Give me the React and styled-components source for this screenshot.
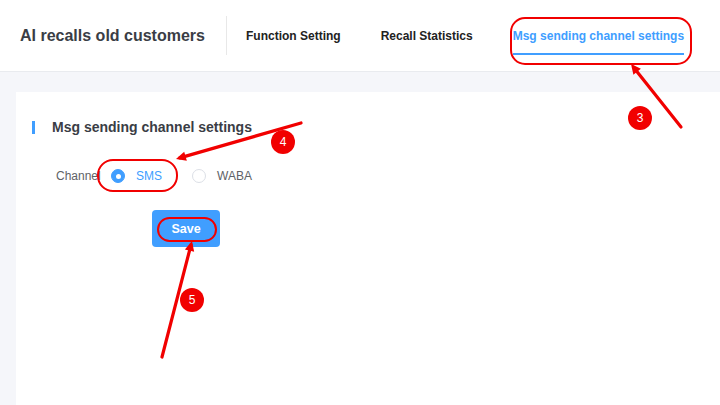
import React from "react";
import styled, { createGlobalStyle } from "styled-components";

const Global = createGlobalStyle`
  html, body { margin: 0; padding: 0; }
  body { font-family: "Liberation Sans", Arial, sans-serif; background: #f5f6fa; }
  #root { width: 720px; height: 405px; overflow: hidden; }
`;

const Page = styled.div`
  position: relative;
  width: 720px;
  height: 405px;
  overflow: hidden;
  background: #f5f6fa;
  display: flex;
  flex-direction: column;
`;

const Header = styled.header`
  height: 71px;
  background: #fff;
  border-bottom: 1px solid #e9ebef;
  display: flex;
  align-items: center;
  padding-left: 20px;
  flex-shrink: 0;
  white-space: nowrap;
`;

const Title = styled.h1`
  margin: 0;
  font-size: 16px;
  font-weight: bold;
  color: #3a3d45;
  width: 206px;
  flex-shrink: 0;
`;

const Divider = styled.div`
  width: 1px;
  height: 39px;
  background: #e8e8e8;
  margin-right: 19px;
  flex-shrink: 0;
`;

const Tabs = styled.nav`
  display: flex;
  height: 100%;
  gap: 40px;
  flex-shrink: 0;
`;

const Tab = styled.div`
  position: relative;
  display: flex;
  align-items: center;
  font-size: 12px;
  font-weight: bold;
  white-space: nowrap;
  color: ${(p) => (p.$active ? "#409eff" : "#222")};
  &::after {
    content: "";
    display: ${(p) => (p.$active ? "block" : "none")};
    position: absolute;
    left: 0;
    right: 0;
    bottom: 16px;
    height: 2px;
    background: #409eff;
  }
`;

const Body = styled.main`
  flex: 1;
  padding: 20px 0 0 16px;
  display: flex;
`;

const Card = styled.section`
  flex: 1;
  background: #fff;
  padding: 28px 0 0 16px;
`;

const SectionTitle = styled.h2`
  margin: 0;
  display: flex;
  align-items: center;
  gap: 17px;
  font-size: 14px;
  font-weight: bold;
  color: #3a3d45;
  height: 14px;
  &::before {
    content: "";
    width: 3px;
    height: 13px;
    background: #409eff;
  }
`;

const FormRow = styled.div`
  display: flex;
  align-items: center;
  margin-top: 32px;
  padding-left: 24px;
  height: 20px;
`;

const Label = styled.span`
  font-size: 12px;
  color: #606266;
  width: 55px;
  white-space: nowrap;
`;

const RadioGroup = styled.div`
  display: flex;
  align-items: center;
  gap: 30px;
`;

const Radio = styled.label`
  display: flex;
  align-items: center;
  gap: 11px;
  font-size: 12px;
  color: ${(p) => (p.$checked ? "#409eff" : "#606266")};
`;

const Dot = styled.span`
  width: 14px;
  height: 14px;
  border-radius: 50%;
  box-sizing: border-box;
  border: 1px solid ${(p) => (p.$checked ? "#409eff" : "#dcdfe6")};
  background: ${(p) => (p.$checked ? "#409eff" : "#fff")};
  display: flex;
  align-items: center;
  justify-content: center;
  &::after {
    content: "";
    width: 5px;
    height: 5px;
    border-radius: 50%;
    background: #fff;
    display: ${(p) => (p.$checked ? "block" : "none")};
  }
`;

const ButtonRow = styled.div`
  padding-left: 120px;
  margin-top: 24px;
`;

const SaveButton = styled.button`
  width: 68px;
  height: 37px;
  border: none;
  border-radius: 4px;
  background: #409eff;
  color: #fff;
  font-family: "Liberation Sans", Arial, sans-serif;
  font-size: 12.5px;
  font-weight: bold;
  padding: 0;
`;

const Overlay = styled.svg`
  position: absolute;
  left: 0;
  top: 0;
  width: 720px;
  height: 405px;
  pointer-events: none;
`;

const Badge = styled.div`
  position: absolute;
  left: ${(p) => p.$x - 12}px;
  top: ${(p) => p.$y - 12}px;
  width: 24px;
  height: 24px;
  border-radius: 50%;
  background: #f10000;
  color: #fff;
  font-size: 12px;
  display: flex;
  align-items: center;
  justify-content: center;
`;

const RED = "#f10000";

function Arrow({ x1, y1, x2, y2 }) {
  const ang = Math.atan2(y2 - y1, x2 - x1);
  const len = 11;
  const w = 0.45;
  const ax = x2 - len * Math.cos(ang - w);
  const ay = y2 - len * Math.sin(ang - w);
  const bx = x2 - len * Math.cos(ang + w);
  const by = y2 - len * Math.sin(ang + w);
  return (
    <g>
      <line x1={x1} y1={y1} x2={x2 - 4 * Math.cos(ang)} y2={y2 - 4 * Math.sin(ang)} stroke={RED} strokeWidth="3.2" strokeLinecap="round" />
      <polygon points={`${x2},${y2} ${ax},${ay} ${bx},${by}`} fill={RED} />
    </g>
  );
}

export default function App() {
  return (
    <>
      <Global />
      <Page>
        <Header>
          <Title>AI recalls old customers</Title>
          <Divider />
          <Tabs>
            <Tab>Function Setting</Tab>
            <Tab>Recall Statistics</Tab>
            <Tab $active>Msg sending channel settings</Tab>
          </Tabs>
        </Header>
        <Body>
          <Card>
            <SectionTitle>Msg sending channel settings</SectionTitle>
            <FormRow>
              <Label>Channel</Label>
              <RadioGroup>
                <Radio $checked>
                  <Dot $checked />
                  SMS
                </Radio>
                <Radio>
                  <Dot />
                  WABA
                </Radio>
              </RadioGroup>
            </FormRow>
            <ButtonRow>
              <SaveButton>Save</SaveButton>
            </ButtonRow>
          </Card>
        </Body>
        <Overlay viewBox="0 0 720 405">
          <rect x="511" y="18" width="180" height="46" rx="14" fill="none" stroke={RED} strokeWidth="2" />
          <rect x="98" y="160" width="79" height="31" rx="15" fill="#fff" fillOpacity="0" stroke={RED} strokeWidth="2" />
          <rect x="158" y="218" width="58" height="23" rx="11.5" fill="none" stroke={RED} strokeWidth="2" />
          <Arrow x1={681} y1={127} x2={631} y2={64} />
          <Arrow x1={301} y1={123} x2={176} y2={159} />
          <Arrow x1={162} y1={357} x2={192} y2={241} />
        </Overlay>
        <Badge $x={640} $y={118}>3</Badge>
        <Badge $x={283} $y={142}>4</Badge>
        <Badge $x={192} $y={300}>5</Badge>
      </Page>
    </>
  );
}
